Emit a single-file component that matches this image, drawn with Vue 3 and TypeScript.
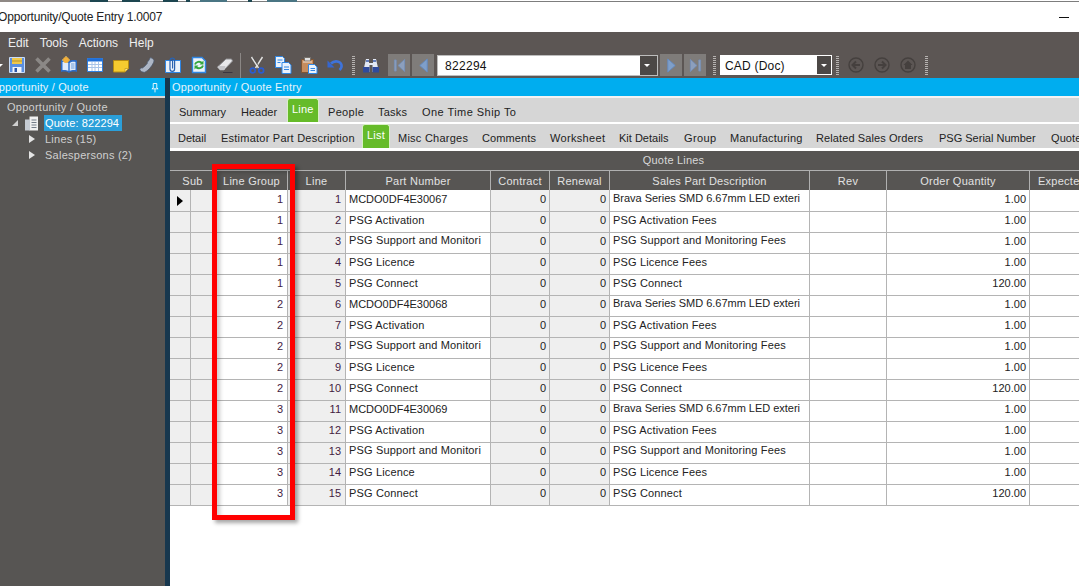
<script setup lang="ts">
interface Row { g: number; n: number; part: string; desc: string; qty: string; hi: boolean; tight: boolean }
interface Tab { t: string; w: number; ls: number; on?: boolean }
const names: [string, string, string][] = [
  ['', '', '1.00'],
  ['PSG Activation', 'PSG Activation Fees', '1.00'],
  ['PSG Support and Monitori', 'PSG Support and Monitoring Fees', '1.00'],
  ['PSG Licence', 'PSG Licence Fees', '1.00'],
  ['PSG Connect', 'PSG Connect', '120.00'],
]
const rows: Row[] = []
for (let i = 0; i < 15; i++) {
  const g = Math.floor(i / 5)
  const t = names[i % 5]
  rows.push({
    g: g + 1,
    n: i + 1,
    part: i % 5 === 0 ? 'MCDO0DF4E3006' + (7 + g) : t[0],
    desc: i % 5 === 0 ? 'Brava Series SMD 6.67mm LED exteri' : t[1],
    qty: t[2],
    hi: i % 5 === 2,
    tight: i % 5 === 0,
  })
}
const tabs1: Tab[] = [
  { t: 'Summary', w: 62, ls: 0 },
  { t: 'Header', w: 46, ls: 0 },
  { t: 'Line', w: 32, ls: 0.2, on: true },
  { t: 'People', w: 50, ls: 0.3 },
  { t: 'Tasks', w: 44, ls: 0.2 },
  { t: 'One Time Ship To', w: 110, ls: 0.45 },
]
const tabs2: Tab[] = [
  { t: 'Detail', w: 43, ls: 0 },
  { t: 'Estimator Part Description', w: 141, ls: 0.23 },
  { t: 'List', w: 28, ls: 0.2, on: true },
  { t: 'Misc Charges', w: 84, ls: 0.25 },
  { t: 'Comments', w: 68, ls: 0.1 },
  { t: 'Worksheet', w: 69, ls: 0.33 },
  { t: 'Kit Details', w: 65, ls: 0 },
  { t: 'Group', w: 46, ls: 0.4 },
  { t: 'Manufacturing', w: 86, ls: 0.23 },
  { t: 'Related Sales Orders', w: 123, ls: 0.1 },
  { t: 'PSG Serial Number', w: 112, ls: 0 },
  { t: 'Quote', w: 40, ls: 0.1 },
]
</script>

<template>
  <div class="app">
    <div class="strip"><i class="f f0"></i><i class="f f1"></i><i class="f f2"></i><i class="f f3"></i><i class="f f4"></i><i class="f f5"></i><i class="f f6"></i><i class="f f7"></i></div>
    <div class="title">
      <span class="title-text">Opportunity/Quote Entry 1.0007</span>
      <span class="minimize"></span>
    </div>
    <div class="menu">
      <span>Edit</span><span>Tools</span><span>Actions</span><span>Help</span>
    </div>
    <div class="toolbar">
      <i class="edge-arrow"></i>
      <div class="tools-left">
        <!-- save -->
        <svg class="ic" viewBox="0 0 18 18"><path d="M1.500 1.500h15v15h-15z" fill="#5b8fe0" stroke="#c9dcf7"/><path d="M4 2h10v6H4z" fill="#f0c84a"/><path d="M4 5h10" stroke="#b8922a"/><path d="M4.500 11h9v5.500h-9z" fill="#f2f5fa"/><path d="M6.500 12h2.500v4h-2.500z" fill="#2b55a5"/></svg>
        <!-- delete -->
        <svg class="ic" viewBox="0 0 18 18"><path d="M2.500 2.500l13 13M15.500 2.500l-13 13" stroke="#8b8886" stroke-width="3.600"/></svg>
        <!-- book with bulb -->
        <svg class="ic" viewBox="0 0 18 18"><path d="M1 4.500c3-.8 6-.6 8 1 2-1.600 5-1.800 8-1V16c-3-.8-6-.6-8 1-2-1.600-5-1.800-8-1z" fill="#2c6cc8"/><path d="M2.500 6c2.200-.4 4.500-.2 5.800 1v8c-1.300-1-3.600-1.200-5.800-1zM15.500 6c-2.200-.4-4.500-.2-5.800 1v8c1.300-1 3.600-1.200 5.800-1z" fill="#dfeafa"/><path d="M11 8h3.500M11 10h3.500M11 12h3.500" stroke="#6f9fdc"/><circle cx="6" cy="4" r="3" fill="#f3b13a"/><path d="M6 0v1M2 4h1M9 4h1" stroke="#f8d88a"/></svg>
        <!-- calendar -->
        <svg class="ic" viewBox="0 0 18 18"><path d="M1.500 2.500h15v13h-15z" fill="#fff" stroke="#2f7fe0"/><path d="M1.500 2.500h15v3h-15z" fill="#1f6fd8"/><path d="M2 8.500h14M2 11.500h14M6 6v9M9 6v9M12.500 6v9" stroke="#a9c4e8"/></svg>
        <!-- note -->
        <svg class="ic" viewBox="0 0 18 18"><path d="M1.500 4.500h15v8l-3.500 3.500H1.500z" fill="#f6cb2f" stroke="#b78c12"/><path d="M13 16v-3.500h3.500z" fill="#fbe78c" stroke="#b78c12" stroke-width=".6"/></svg>
        <!-- phone -->
        <svg class="ic" viewBox="0 0 18 18"><path d="M1.800 13.300c.5-1.200 1.500-1.600 2.600-1.300 1.700-1 3.800-3 4.900-4.700-.2-1.400.6-2 1.300-2.500l1.700-3.200c1 .2 3.500 1.400 3.800 3.200-.9 3.800-5 9.200-9.300 11.500-2.400.2-4.500-1-5-3z" fill="#aeb7c6" stroke="#4c5a70" stroke-width=".8"/></svg>
        <!-- attachment -->
        <svg class="ic" viewBox="0 0 18 18"><path d="M1.500 4.500h15v12h-15z" fill="#eaf2fb" stroke="#2f86e4"/><path d="M6 4.500a2.300 2.300 0 0 1 4.600 0v8.500a2.300 2.300 0 0 1-4.600 0V5.500a1.300 1.300 0 0 1 2.600 0v7" fill="none" stroke="#2a62b0" stroke-width="1.200"/></svg>
        <!-- refresh doc -->
        <svg class="ic" viewBox="0 0 18 18"><path d="M2.500 1.500h9.500l3.500 3.500v11.500h-13z" fill="#eaf2fb" stroke="#2f86e4" stroke-width="1.400"/><path d="M5 8.500a4 3.500 0 0 1 7-1.500M13 9.500a4 3.500 0 0 1-7 1.500" fill="none" stroke="#33a63c" stroke-width="1.900"/><path d="M13.500 4.500v4h-4zM4.500 13.500v-4h4z" fill="#33a63c"/></svg>
        <!-- eraser -->
        <svg class="ic" viewBox="0 0 18 18"><path d="M1.500 11l8.500-8h5.500l1 2-8.500 9H4z" fill="#e8e8ea" stroke="#8d8d90"/><path d="M1.500 11L4 14h4.500l1-4H3z" fill="#c6c6ca"/><path d="M7 16.500h9.500" stroke="#3a3540"/></svg>
        <span class="sep"></span>
        <!-- cut -->
        <svg class="ic" viewBox="0 0 18 18"><path d="M3.500 1l7 11M14.500 1l-7 11" stroke="#e2e2e2" stroke-width="1.400"/><path d="M5 1l5 8" stroke="#555" stroke-width=".7"/><circle cx="4.800" cy="14.500" r="2.400" fill="none" stroke="#2a5cd0" stroke-width="1.700"/><circle cx="13.200" cy="14.500" r="2.400" fill="none" stroke="#2a5cd0" stroke-width="1.700"/></svg>
        <!-- copy -->
        <svg class="ic" viewBox="0 0 18 18"><path d="M1.500 .5h7l2 2v9h-9z" fill="#eaf2fb" stroke="#2f86e4"/><path d="M8 6.500h6.500l2.500 2.500v8.500H8z" fill="#eaf2fb" stroke="#2f86e4"/><path d="M3.500 4h5M3.500 6.500h3M10 11h5M10 13.500h5" stroke="#2f86e4"/></svg>
        <!-- paste -->
        <svg class="ic" viewBox="0 0 18 18"><path d="M1.500 3.500h12v13h-12z" fill="#c68d5e" stroke="#7e5433"/><path d="M4.500 1.500h6v3.500h-6z" fill="#e2e2e2" stroke="#77716b"/><path d="M3 6h9" stroke="#efe3d8"/><path d="M8.500 8.500h6l2.500 2.500v6.500H8.500z" fill="#eaf2fb" stroke="#2f86e4"/><path d="M10.500 12.500h4.500M10.500 14.500h4.500" stroke="#2f86e4"/></svg>
        <!-- undo -->
        <svg class="ic" viewBox="0 0 18 18"><path d="M5 7.500c3.500-3.500 9.500-2.500 10.500 1.500.4 2-.5 3.700-2 5" fill="none" stroke="#3e73da" stroke-width="2.600"/><path d="M1.500 4.500v7h7z" fill="#3566cf"/></svg>
        <span class="grip g1"></span>
        <!-- find -->
        <svg class="ic" viewBox="0 0 18 18"><path d="M4 3h3v4h4V3h3l3 13h-6.500V9h-3v7H1z" fill="#e2e8f5"/><path d="M1 11h6.500v5.500H1zM10.500 11H17v5.500h-6.500z" fill="#2f4a9c"/><path d="M4 5h3M11 5h3" stroke="#3a5aa8" stroke-width="1.500"/></svg>
        <span class="nav"><svg viewBox="0 0 14 16"><path d="M1.500 2v12h2V2z" fill="#8c9fbd" stroke="#7590b8" stroke-width=".8"/><path d="M12.500 1.500L5.500 8l7 6.500z" fill="#8c9fbd" stroke="#7590b8"/></svg></span>
        <span class="nav"><svg viewBox="0 0 14 16"><path d="M11 1L3 8l8 7z" fill="#7f9fc9" stroke="#648bc2"/></svg></span>
        <div class="combo wide"><span>822294</span><i class="drop"></i></div>
        <span class="nav"><svg viewBox="0 0 14 16"><path d="M3 1l8 7-8 7z" fill="#7f9fc9" stroke="#648bc2"/></svg></span>
        <span class="nav"><svg viewBox="0 0 14 16"><path d="M1.500 1.500l7 6.500-7 6.500z" fill="#8c9fbd" stroke="#7590b8"/><path d="M10.500 2v12h2V2z" fill="#8c9fbd" stroke="#7590b8" stroke-width=".8"/></svg></span>
        <span class="grip g2"></span>
        <div class="combo small"><span>CAD (Doc)</span><i class="drop"></i></div>
        <span class="grip g3"></span>
        <svg class="circ" viewBox="0 0 16 16"><circle cx="8" cy="8" r="7" fill="none" stroke="#45403e" stroke-width="1.400"/><path d="M12 8H5M8 4.500L4.500 8 8 11.500" fill="none" stroke="#45403e" stroke-width="2"/></svg>
        <svg class="circ" viewBox="0 0 16 16"><circle cx="8" cy="8" r="7" fill="none" stroke="#45403e" stroke-width="1.400"/><path d="M4 8h7M8 4.500L11.500 8 8 11.500" fill="none" stroke="#45403e" stroke-width="2"/></svg>
        <svg class="circ" viewBox="0 0 16 16"><circle cx="8" cy="8" r="7" fill="none" stroke="#45403e" stroke-width="1.400"/><path d="M8 3.500L3.500 8H5v4h6V8h1.500z" fill="#45403e"/></svg>
        <span class="grip g4"></span>
      </div>
    </div>
    <div class="body">
      <aside class="side">
        <div class="panel-head side-head"><span>Opportunity / Quote</span>
          <svg class="pin" viewBox="0 0 9 11"><path d="M2.500 1h4v5l1.500 1H1l1.500-1zM4.500 7v4" fill="none" stroke="#fff"/></svg>
        </div>
        <div class="tree">
          <div class="t0">Opportunity / Quote</div>
          <div class="t1">
            <i class="tri-open"></i>
            <svg class="doc" viewBox="0 0 14 15"><path d="M5 .5h8.500v14H5z" fill="#f0f0f0"/><path d="M.5 3.500h5v11h-5z" fill="#c6ccd4"/><path d="M7 4h5M7 6.500h5M7 9h5M7 11.500h5" stroke="#737c88"/></svg>
            <span class="sel">Quote: 822294</span>
          </div>
          <div class="t2"><i class="tri"></i><span>Lines (15)</span></div>
          <div class="t2"><i class="tri"></i><span>Salespersons (2)</span></div>
        </div>
      </aside>
      <main class="main">
        <div class="panel-head main-head">Opportunity / Quote Entry</div>
        <div class="tabs t-one">
          <span v-for="t in tabs1" :key="t.t" :class="['tab', { on: t.on }]" :style="{ width: t.w + 'px', letterSpacing: t.ls + 'px' }">{{ t.t }}</span>
        </div>
        <div class="tabs t-two">
          <span v-for="t in tabs2" :key="t.t" :class="['tab', { on: t.on }]" :style="{ width: t.w + 'px', letterSpacing: t.ls + 'px' }">{{ t.t }}</span>
        </div>
        <div class="grid-wrap">
          <div class="grid-title">Quote Lines</div>
          <table class="grid">
            <colgroup>
              <col class="c0"><col class="c1"><col class="c2"><col class="c3"><col class="c4"><col class="c5"><col class="c6"><col class="c7"><col class="c8"><col class="c9"><col class="c10">
            </colgroup>
            <thead>
              <tr>
                <th colspan="2">Sub</th><th>Line Group</th><th>Line</th><th>Part Number</th><th>Contract</th><th>Renewal</th><th>Sales Part Description</th><th>Rev</th><th>Order Quantity</th><th class="clip">Expected</th>
              </tr>
            </thead>
            <tbody>
              <tr v-for="(r, i) in rows" :key="r.n">
                <td class="ro mark"><i v-if="i === 0" class="arrow"></i></td>
                <td class="ro"></td>
                <td class="num pp">{{ r.g }}</td>
                <td class="ro num pp">{{ r.n }}</td>
                <td :class="['txt', { hi: r.hi, tight: r.tight }]">{{ r.part }}</td>
                <td class="ro num">0</td>
                <td class="ro num">0</td>
                <td :class="['txt', { hi: r.hi || r.tight, brava: r.tight }]">{{ r.desc }}</td>
                <td></td>
                <td class="num">{{ r.qty }}</td>
                <td></td>
              </tr>
            </tbody>
          </table>
          <div class="callout"></div>
        </div>
      </main>
    </div>
  </div>
</template>

<style>
html, body { margin: 0; background: #fff; overflow: hidden; }
</style>

<style scoped>
.app {
  width: 1079px;
  height: 586px;
  overflow: hidden;
  font-family: "Liberation Sans", Arial, sans-serif;
  font-size: 11px;
  display: flex;
  flex-direction: column;
  background: #fff;
}
.strip { height: 2px; flex: none; border-bottom: 1px solid #7d7d7d; box-sizing: border-box; position: relative; }
.f { position: absolute; top: 0; height: 2px; background: #1d4650; }
.f0 { left: 0; width: 90px; background: #8f8985; }
.f1 { left: 90px; width: 18px; }
.f2 { left: 122px; width: 18px; }
.f3 { left: 163px; width: 15px; }
.f4 { left: 186px; width: 4px; }
.f5 { left: 200px; width: 27px; background: #4a7583; }
.f6 { left: 248px; width: 4px; }
.f7 { left: 267px; width: 30px; background: #4a7583; }
.title {
  height: 30px;
  flex: none;
  display: flex;
  align-items: center;
  justify-content: space-between;
  padding-right: 10px;
  color: #222;
  font-size: 12px;
}
.title-text { margin-left: -2px; letter-spacing: -0.17px; }
.minimize { width: 10px; height: 1px; background: #111; }
.menu {
  height: 20px;
  flex: none;
  box-sizing: border-box;
  padding: 2px 0 0 8px;
  background: #5c5654;
  color: #efefef;
  font-size: 12px;
  display: flex;
  align-items: center;
  gap: 11px;
}
.toolbar {
  height: 26px;
  flex: none;
  background: #5c5654;
  display: flex;
  align-items: center;
  position: relative;
}
.edge-arrow {
  position: absolute;
  left: -3px;
  top: 12px;
  border: 3px solid transparent;
  border-top: 3px solid #fff;
  border-bottom: 0;
}
.tools-left { display: flex; align-items: center; padding-left: 8px; }
.ic { width: 18px; height: 18px; flex: none; margin-right: 8px; }
.sep { width: 1px; height: 25px; background: #8b8785; margin: 0 7px 0 -2px; flex: none; }
.grip {
  width: 3px;
  height: 19px;
  flex: none;
  background: repeating-linear-gradient(#b5b2b0 0 1px, transparent 1px 2px);
}
.g1 { margin: 0 7px 0 0; }
.nav {
  width: 22px;
  height: 22px;
  flex: none;
  margin-right: 2px;
  background: #7f7c7a;
  display: flex;
  align-items: center;
  justify-content: center;
}
.nav svg { width: 13px; height: 15px; }
.combo {
  height: 21px;
  flex: none;
  box-sizing: border-box;
  background: #fff;
  border: 1px solid #bdbdbd;
  display: flex;
  align-items: center;
  justify-content: space-between;
  color: #111;
  font-size: 12px;
  letter-spacing: 0.3px;
  padding-left: 5px;
}
.combo span { position: relative; top: 1px; }
.combo.wide { width: 221px; margin: 0 2px 0 1px; padding-left: 7px; }
.combo.small { width: 112px; height: 20px; padding-left: 4px; border-color: #fff; letter-spacing: 0.2px; }
.drop {
  width: 17px;
  height: 100%;
  background: #4c4846;
  position: relative;
}
.combo.small .drop { width: 14px; }
.drop::after {
  content: "";
  position: absolute;
  left: 4px;
  top: 8px;
  border: 3px solid transparent;
  border-top: 3px solid #fff;
  border-bottom: 0;
}
.g2 { margin: 0 4px 0 5px; }
.g3 { margin: 0 9px 0 4px; }
.g4 { margin: 0 0 0 -1px; }
.circ { width: 16px; height: 16px; margin-right: 10px; flex: none; }
.body { flex: 1; display: flex; min-height: 0; }
.side {
  width: 165px;
  flex: none;
  background: #575553;
  color: #cfcfcf;
  border-right: 5px solid #17374e;
  display: flex;
  flex-direction: column;
}
.panel-head {
  height: 18px;
  flex: none;
  background: #00adef;
  color: #e6f4fb;
  font-size: 11px;
  line-height: 19px;
  letter-spacing: 0.15px;
  border-bottom: 2px solid #f3f3f3;
}
.main-head { padding-left: 2px; letter-spacing: 0.2px; }
.side-head {
  display: flex;
  justify-content: space-between;
  align-items: center;
  padding-right: 6px;
  border-bottom: 2px solid #d8d8d8;
}
.side-head span { margin-left: -10px; letter-spacing: 0.15px; }
.pin { width: 8px; height: 11px; }
.tree { padding: 1px 0 0 7px; line-height: 16px; letter-spacing: 0.25px; }
.t1, .t2 { display: flex; align-items: center; }
.t1 { padding-left: 5px; }
.t2 { padding-left: 22px; }
.doc { width: 15px; height: 15px; margin: 0 5px 0 6px; }
.sel { background: #2b9fd9; color: #fff; padding: 0 3px 0 1px; letter-spacing: 0.1px; }
.t2 span { margin-left: 8px; padding-left: 2px; }
.tri-open { width: 0; height: 0; border-left: 6px solid transparent; border-bottom: 6px solid #cfcfcf; }
.tri { width: 0; height: 0; border: 4px solid transparent; border-left: 6px solid #e4e4e4; border-right: 0; }
.main { flex: 1; min-width: 0; display: flex; flex-direction: column; background: #fff; }
.tabs {
  height: 24px;
  flex: none;
  background: #d6d6d6;
  display: flex;
  align-items: flex-end;
  color: #222;
  white-space: nowrap;
  overflow: hidden;
  box-sizing: border-box;
}
.t-one { padding-left: 9px; }
.t-two { padding-left: 8px; margin-top: 2px; }
.tab { padding-bottom: 3px; line-height: 14px; flex: none; }
.tab.on {
  box-sizing: border-box;
  height: 24px;
  background: #66bb29;
  color: #fff;
  border: 1px solid #d9f0c6;
  border-bottom: 0;
  border-radius: 3px 3px 0 0;
  padding: 3px 0 0 4px;
}
.t-one .tab.on { margin-right: 9px; }
.t-two .tab.on { margin-right: 8px; }
.grid-wrap { flex: 1; position: relative; min-height: 0; margin-top: 3px; }
.grid-title {
  height: 19px;
  background: #575553;
  color: #d8d8d8;
  text-align: center;
  line-height: 19px;
  padding-left: 98px;
  letter-spacing: 0.2px;
}
.grid {
  border-collapse: separate;
  border-spacing: 0;
  table-layout: fixed;
  width: 1110px;
}
.c0 { width: 21px; } .c1 { width: 25px; } .c2 { width: 72px; } .c3 { width: 58px; }
.c4 { width: 145px; } .c5 { width: 59px; } .c6 { width: 60px; } .c7 { width: 200px; }
.c8 { width: 77px; } .c9 { width: 143px; } .c10 { width: 250px; }
th {
  height: 20px;
  padding: 0;
  box-sizing: border-box;
  background: #575553;
  color: #e2e2e2;
  font-weight: 400;
  font-size: 11px;
  letter-spacing: 0.25px;
  border-top: 1px solid #b0b0b0;
  border-right: 1px solid #b0b0b0;
  white-space: nowrap;
  overflow: hidden;
}
th.clip { text-align: left; padding-left: 8px; }
td {
  height: 21px;
  padding: 0 0 5px;
  box-sizing: border-box;
  background: #fff;
  color: #222;
  border-bottom: 1px solid #b4b4b4;
  border-right: 1px solid #b4b4b4;
  white-space: nowrap;
  overflow: hidden;
}
tbody tr:first-child td { height: 22px; padding-bottom: 4px; }
td.ro { background: #efefef; }
td.num { text-align: right; padding-right: 3px; }
td.pp { color: #431a3f; padding-right: 4px; }
td.txt { padding-left: 3px; letter-spacing: 0.15px; }
td.txt.tight { letter-spacing: 0; }
td.txt.brava { letter-spacing: -0.02px; }
td.txt.hi { padding-bottom: 7px; }
tbody tr:first-child td.txt.hi { padding-bottom: 6px; }
td.mark { position: relative; }
.arrow {
  position: absolute;
  left: 7px;
  top: 6px;
  border: 5px solid transparent;
  border-left: 6px solid #000;
  border-right: 0;
}
.callout {
  position: absolute;
  left: 42px;
  top: 13px;
  width: 83px;
  height: 356px;
  box-sizing: border-box;
  border: 5px solid #f00;
  box-shadow: 3px 3px 4px rgba(0, 0, 0, 0.35), inset 3px 3px 4px rgba(0, 0, 0, 0.2);
}
</style>
